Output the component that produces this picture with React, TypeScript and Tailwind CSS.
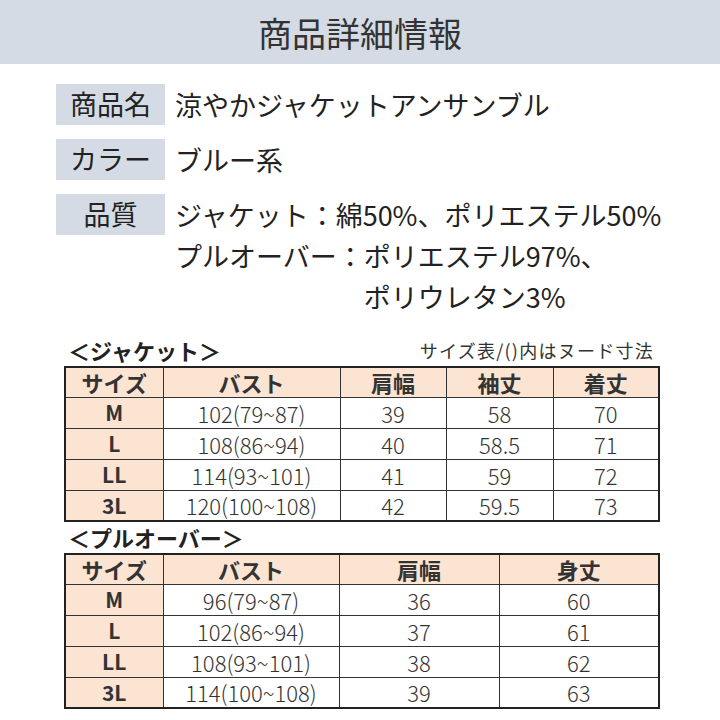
import React from 'react';

const font = "font-['Noto_Sans_CJK_JP','Noto_Sans',sans-serif]";

type Row = { size: string; values: string[] };

const jacketRows: Row[] = [
  { size: 'M', values: ['102(79~87)', '39', '58', '70'] },
  { size: 'L', values: ['108(86~94)', '40', '58.5', '71'] },
  { size: 'LL', values: ['114(93~101)', '41', '59', '72'] },
  { size: '3L', values: ['120(100~108)', '42', '59.5', '73'] },
];

const pulloverRows: Row[] = [
  { size: 'M', values: ['96(79~87)', '36', '60'] },
  { size: 'L', values: ['102(86~94)', '37', '61'] },
  { size: 'LL', values: ['108(93~101)', '38', '62'] },
  { size: '3L', values: ['114(100~108)', '39', '63'] },
];

function InfoRow({ label, children }: { label: string; children: React.ReactNode }) {
  return (
    <div className="flex items-start">
      <div className="flex h-[41px] w-[109px] shrink-0 items-center justify-center bg-[#d4dbe4] text-[27px] text-[#222]">
        {label}
      </div>
      <div className="ml-[10px] text-[27px] leading-[41px] text-[#222]">{children}</div>
    </div>
  );
}

function SizeTable({ heads, widths, rows }: { heads: string[]; widths: string[]; rows: Row[] }) {
  return (
    <table className="w-[594px] table-fixed border-collapse border-2 border-[#222]">
      <colgroup>
        {widths.map((w, i) => (
          <col key={i} className={w} />
        ))}
      </colgroup>
      <thead>
        <tr className="h-[30px] bg-[#fce4d2]">
          {heads.map((h) => (
            <th key={h} className="border border-[#333] p-0 text-[22px] font-bold leading-none text-[#333]">
              {h}
            </th>
          ))}
        </tr>
      </thead>
      <tbody>
        {rows.map((r) => (
          <tr key={r.size} className="h-[31px]">
            <td className="border border-[#333] bg-[#fce4d2] p-0 text-center text-[21px] font-bold leading-none text-[#333]">
              {r.size}
            </td>
            {r.values.map((v, i) => (
              <td key={i} className="border border-[#333] p-0 text-center text-[22px] font-light leading-none text-[#333]">
                {v}
              </td>
            ))}
          </tr>
        ))}
      </tbody>
    </table>
  );
}

export default function App() {
  return (
    <div className={`h-[720px] w-[720px] overflow-hidden bg-white ${font}`}>
      <header className="flex h-16 items-center justify-center bg-[#d4dbe4] text-[34px] text-[#333]">
        商品詳細情報
      </header>

      <div className="mt-5 flex flex-col gap-[14px] pl-14">
        <InfoRow label="商品名">涼やかジャケットアンサンブル</InfoRow>
        <InfoRow label="カラー">ブルー系</InfoRow>
        <InfoRow label="品質">
          <div>ジャケット：綿50%、ポリエステル50%</div>
          <div className="flex">
            <span>プルオーバー：</span>
            <span>
              ポリエステル97%、
              <br />
              ポリウレタン3%
            </span>
          </div>
        </InfoRow>
      </div>

      <section className="ml-16 mt-[18px] w-[594px]">
        <div className="flex h-[31px] items-center justify-between">
          <span className="pl-1 text-[22px] font-bold text-[#222]">＜ジャケット＞</span>
          <span className="pr-1 text-[18px] tracking-[0.07em] text-[#333]">サイズ表/()内はヌード寸法</span>
        </div>
        <SizeTable
          heads={['サイズ', 'バスト', '肩幅', '袖丈', '着丈']}
          widths={['w-[98px]', 'w-[177px]', 'w-[106px]', 'w-[107px]', 'w-[106px]']}
          rows={jacketRows}
        />
        <div className="flex h-[31px] items-center">
          <span className="pl-1 text-[22px] font-bold text-[#222]">＜プルオーバー＞</span>
        </div>
        <SizeTable
          heads={['サイズ', 'バスト', '肩幅', '身丈']}
          widths={['w-[98px]', 'w-[176px]', 'w-[160px]', 'w-[160px]']}
          rows={pulloverRows}
        />
      </section>
    </div>
  );
}
